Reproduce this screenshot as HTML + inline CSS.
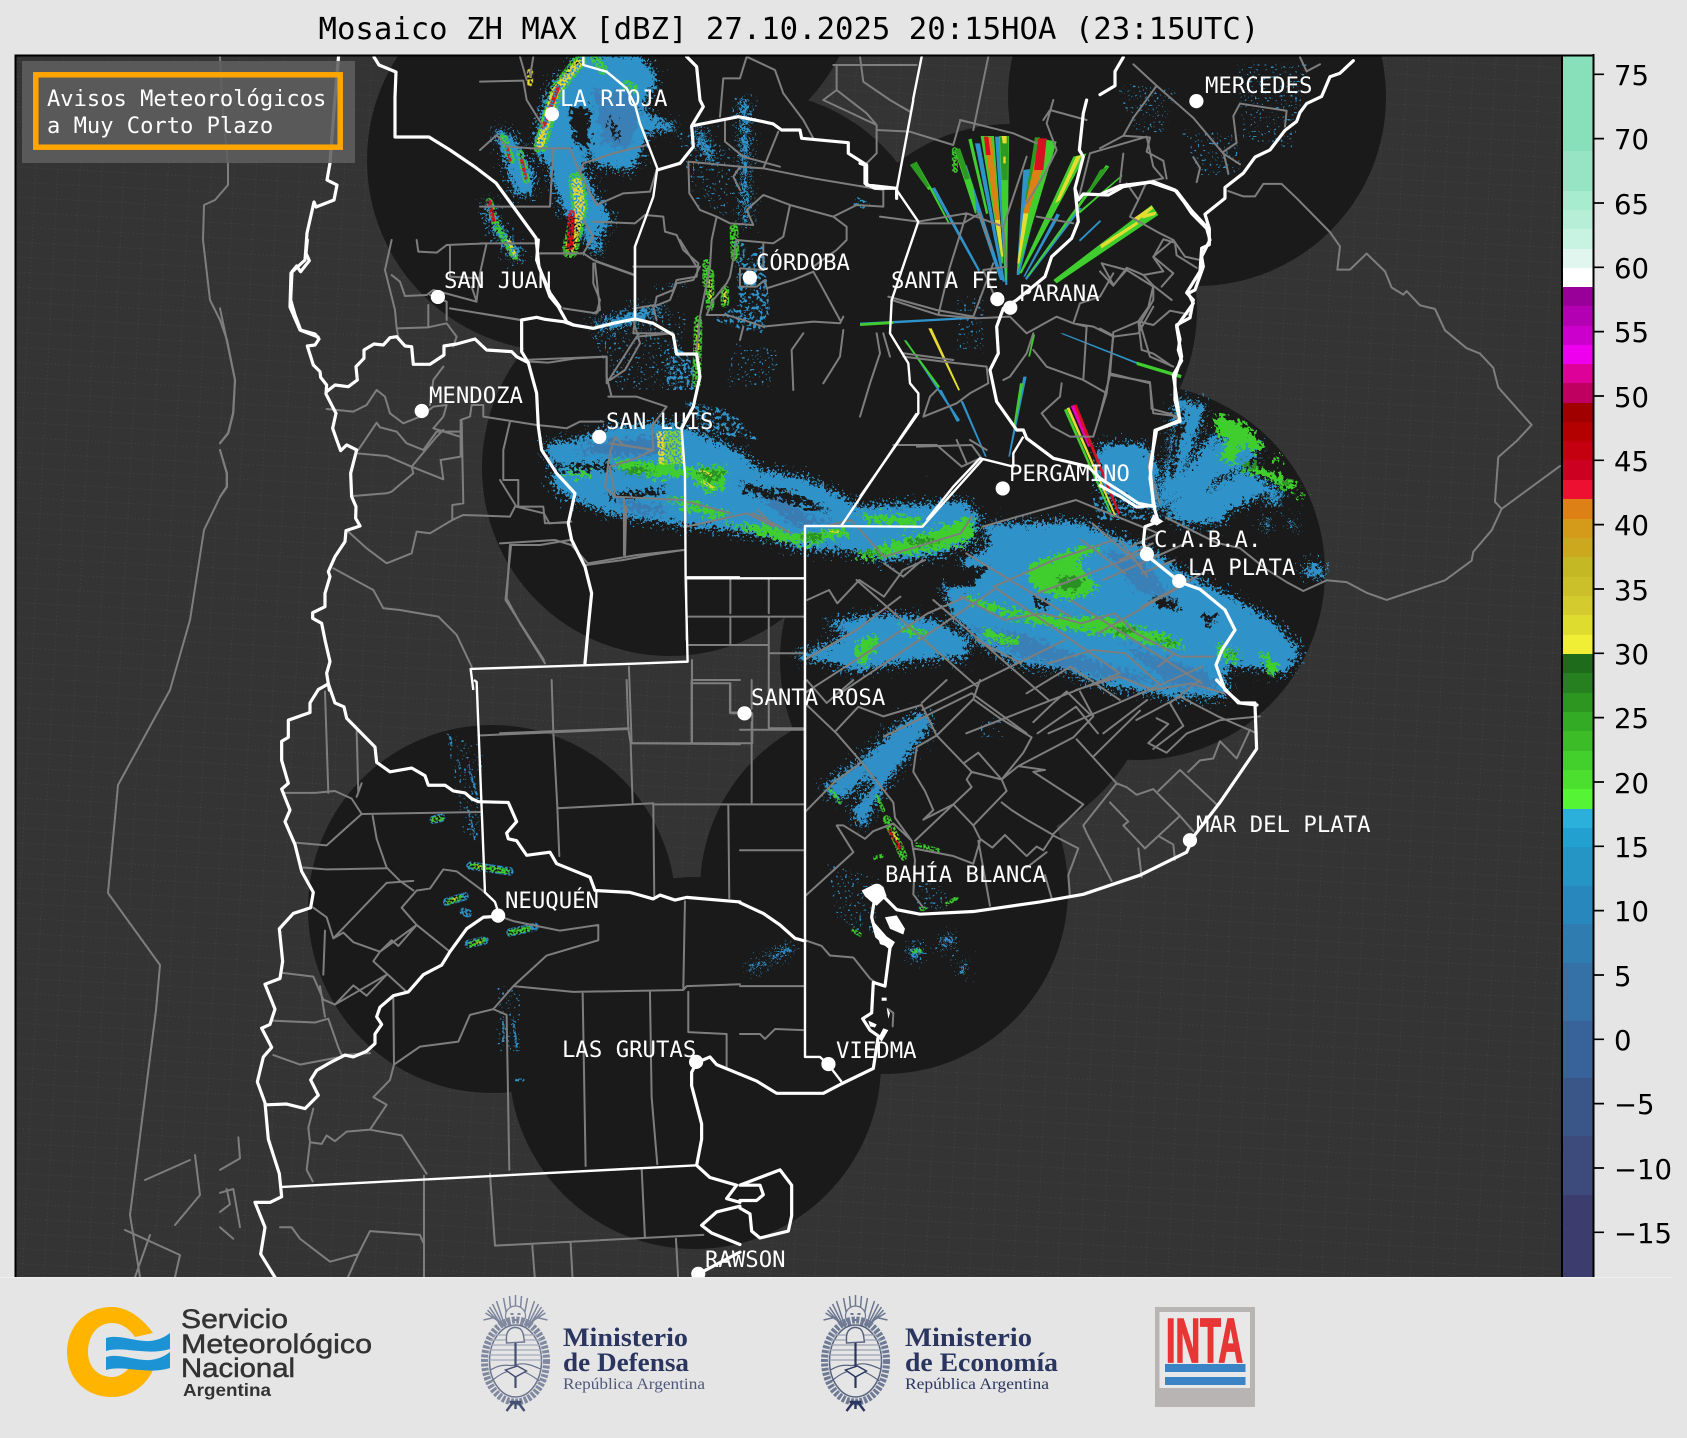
<!DOCTYPE html>
<html lang="es"><head><meta charset="utf-8"><title>Mosaico ZH MAX</title>
<style>
html,body{margin:0;padding:0;background:#e5e5e5;width:1687px;height:1438px;overflow:hidden}
svg{display:block}
.g{fill:none;stroke:#7e7e7e;stroke-width:2;vector-effect:non-scaling-stroke;stroke-linejoin:round;stroke-linecap:round}
.w{fill:none;stroke:#fff;stroke-width:3.2;vector-effect:non-scaling-stroke;stroke-linejoin:round;stroke-linecap:round}
.t{fill:none;stroke:#fff;stroke-width:2.4;vector-effect:non-scaling-stroke;stroke-linejoin:round}
.l{font-family:"DejaVu Sans Mono","Liberation Mono",monospace;font-size:22.3px;fill:#fff}
.k{font-family:"DejaVu Sans","Liberation Sans",sans-serif;font-size:27.5px;fill:#000}
.s{font-family:"Liberation Sans",sans-serif;fill:#333}
.m{font-family:"Liberation Serif",serif;fill:#2a3560}
</style></head><body>
<svg xmlns="http://www.w3.org/2000/svg" width="1687" height="1438" viewBox="0 0 1687 1438">
<defs>
<pattern id="dots" width="22" height="15" patternUnits="userSpaceOnUse" patternTransform="rotate(3)">
<rect width="22" height="15" fill="#343434"/>
<path d="M0 1h22M1 0v15" stroke="#424242" stroke-width="1" stroke-dasharray="1 3" fill="none"/>
</pattern>
<clipPath id="ax"><rect x="15" y="55" width="1547" height="1222"/></clipPath>
<filter id="r" filterUnits="userSpaceOnUse" x="0" y="0" width="1687" height="1438" color-interpolation-filters="sRGB">
<feTurbulence type="fractalNoise" baseFrequency=".24" numOctaves="3" seed="3"/>
<feDisplacementMap in="SourceGraphic" scale="20" xChannelSelector="R" yChannelSelector="G"/>
</filter>
<filter id="r2" filterUnits="userSpaceOnUse" x="0" y="0" width="1687" height="1438" color-interpolation-filters="sRGB">
<feTurbulence type="fractalNoise" baseFrequency=".4" numOctaves="2" seed="9"/>
<feDisplacementMap in="SourceGraphic" scale="46" xChannelSelector="G" yChannelSelector="R"/>
</filter>
<filter id="s" filterUnits="userSpaceOnUse" x="0" y="0" width="1687" height="1438" color-interpolation-filters="sRGB">
<feTurbulence type="fractalNoise" baseFrequency=".5" numOctaves="1" seed="7"/>
<feColorMatrix type="matrix" values="0 0 0 0 0 0 0 0 0 0 0 0 0 0 0 9 0 0 0 -3.7" result="m"/>
<feComposite in="SourceGraphic" in2="m" operator="in"/>
</filter>
<filter id="sm" filterUnits="userSpaceOnUse" x="0" y="0" width="1687" height="1438" color-interpolation-filters="sRGB">
<feTurbulence type="fractalNoise" baseFrequency=".3" numOctaves="2" seed="5"/>
<feColorMatrix type="matrix" values="0 0 0 0 0 0 0 0 0 0 0 0 0 0 0 12 0 0 0 -6.2" result="m"/>
<feComposite in="SourceGraphic" in2="m" operator="in"/>
</filter>
<filter id="sp" filterUnits="userSpaceOnUse" x="0" y="0" width="1687" height="1438" color-interpolation-filters="sRGB">
<feTurbulence type="fractalNoise" baseFrequency=".42" numOctaves="1" seed="11"/>
<feColorMatrix type="matrix" values="0 0 0 0 0 0 0 0 0 0 0 0 0 0 0 14 0 0 0 -8.9" result="m"/>
<feComposite in="SourceGraphic" in2="m" operator="in"/>
</filter>
<g id="emb">
<g stroke="#6b7690" stroke-width="1.5" fill="none">
<path d="M0-21V-58M3-21L6-57M-3-21L-6-57M6-23L12-55M-6-23L-12-55M10-25L19-52M-10-25L-19-52M12-27L23-49M-12-27L-23-49M14-28L26-46M-14-28L-26-46M16-30L28-43M-16-30L-28-43M17-32L30-40M-17-32L-30-40M19-36L32-33M-19-36L-32-33"/>
</g>
<circle cx="0" cy="-37" r="10" fill="#e5e5e5" stroke="#6b7690" stroke-width="1.2"/>
<path d="M-5-39h3M2-39h3M-3-33h6" stroke="#2a3560" stroke-width="1.3"/>
<ellipse cx="0" cy="8" rx="31" ry="41" fill="none" stroke="#6f7a94" stroke-width="7" stroke-dasharray="3 1.5"/>
<ellipse cx="0" cy="8" rx="26" ry="36" fill="#e5e5e5" stroke="#56627f" stroke-width="1.5"/>
<path d="M-25-8H25M-26-3H26M-26 2H26M-26 7H26M-25-13H25M-22-18H22" stroke="#9aa2b4" stroke-width="1.2"/>
<path d="M-25 17C-12 9-6 14 0 12C8 9 16 12 25 16M-24 28C-14 20-8 17 0 18C8 17 14 21 24 28" fill="none" stroke="#56627f" stroke-width="1.2"/>
<path d="M-9-13C-10-24-2-28 5-24C9-20 8-14 9-11L-9-10Z" fill="#e5e5e5" stroke="#56627f" stroke-width="1.4"/>
<path d="M0-10V35" stroke="#2a3560" stroke-width="2.2"/>
<path d="M-10 17L0 24L11 18L2 13Z" fill="#e5e5e5" stroke="#2a3560" stroke-width="1.4"/>
<path d="M-9 58L-3 50H3L9 58M0 50L0 56M-6 49H6" fill="none" stroke="#2a3560" stroke-width="2.4"/>
</g>
</defs>

<rect width="1687" height="1438" fill="#e5e5e5"/>
<text x="318.5" y="39" font-family="'DejaVu Sans Mono','Liberation Mono',monospace" font-size="30.65" fill="#000">Mosaico ZH MAX [dBZ] 27.10.2025 20:15HOA (23:15UTC)</text>

<g clip-path="url(#ax)">
<rect x="15" y="55" width="1547" height="1222" fill="url(#dots)"/>
<!-- radar coverage -->
<g fill="#1a1a1a">
<circle cx="558" cy="160" r="191"/><circle cx="670" cy="-30" r="190"/><circle cx="750" cy="278" r="187"/>
<circle cx="1011" cy="310" r="186"/><circle cx="1197" cy="97" r="189"/><circle cx="670" cy="468" r="188"/>
<circle cx="1137" cy="572" r="188"/><circle cx="968" cy="660" r="188"/><circle cx="884" cy="890" r="184"/>
<circle cx="695" cy="1063" r="186"/><circle cx="492" cy="909" r="184"/><circle cx="872" cy="445" r="62"/>
</g>

<!-- sparse speckle -->
<g filter="url(#sp)" fill="#2f8fc6">
<g transform="translate(1100,50) scale(.3333,.3571)">
<path d="M40,90L230,110L200,230H110ZM410,30L620,40L580,280L430,250ZM240,220L420,240V350H300Z"/>
</g>
<g transform="translate(860,100) scale(.3333)"><path d="M290,590L370,590V760L300,700Z"/></g>
<g transform="translate(480,50) scale(.3333)">
<path d="M590,240L760,300L740,500L650,470ZM760,880L900,900L880,1010H740ZM300,800L620,780L600,1020H420Z"/>
<path d="M1430,740L1510,760V900H1430ZM520,690H620V720H520Z"/>
</g>
<g transform="translate(740,680) scale(.3333,.3827)">
<path d="M260,480L420,520L400,680L290,620ZM530,520L620,540V600H530ZM720,100H790V150H720Z"/>
</g>
<g transform="translate(220,680) scale(.3333,.3827)">
<path d="M680,140L790,170L780,420L730,400ZM830,790L900,820V970H830Z"/>
</g>
</g>

<!-- medium speckle -->
<g filter="url(#sm)" fill="#2f93ca">
<g transform="translate(480,50) scale(.3333)">
<path d="M760,560L800,580L790,640L850,580L870,780L850,850L790,840L700,810L780,760L770,690Z"/>
<path d="M560,880L640,920L650,1020L560,1020ZM1130,440L1170,460L1160,480L1120,465ZM520,190L590,240L580,250L510,210Z"/>
</g>
<g transform="translate(500,400) scale(.5485,.3333)">
<path d="M330,0L420,30L470,120L380,100ZM1080,290L1120,290L1180,360L1090,360Z"/>
</g>
</g>

<!-- rough blue echoes fringe -->
<g filter="url(#r2)"><use href="#blue"/></g>
<!-- rough blue echoes -->
<g filter="url(#r)">
<g id="blue">
<g transform="translate(500,400) scale(.5485,.3333)">
<path fill="#2f93ca" d="M85,130L130,130L200,90L300,70L360,100L440,165L470,215L550,235L620,290L650,325L700,320L790,320L840,305L870,350L860,420L800,460L700,478L640,445L550,440L470,400L400,380L340,370L250,350L190,330L130,290L95,250L110,205L90,170Z"/>
<path fill="#3a7cb2" d="M130,150L200,120L290,110L330,130L290,165L200,165ZM470,290L520,300L560,350L620,370L540,380ZM210,300L300,320L300,345L230,330Z"/>
<path fill="#2f93ca" d="M810,560L850,480L900,440L880,380L1050,370L1180,450L1250,530L1360,620L1400,660L1455,750L1430,820L1390,800L1320,790L1320,885L1230,885L1100,850L1020,800L950,790L880,730L830,650Z"/>
<path fill="#2f93ca" d="M600,670L700,650L780,660L850,720L850,770L780,770L700,790L650,810L600,780L540,770L600,740L640,700Z"/>
<path fill="#3a7fb6" d="M850,680L950,700L1040,760L1120,800L1230,860L1100,830L950,770ZM1130,730L1290,820L1310,870L1230,860ZM1100,450L1170,480L1230,600L1160,570Z"/>
<path fill="#1a1a1a" d="M100,195L200,190L200,208L110,208ZM200,280L300,265L290,282L210,297ZM440,252L540,282L600,335L520,305L450,275ZM975,595L1000,595L1000,625L975,620ZM1190,590L1230,600L1240,630L1200,620ZM1280,640L1310,650L1290,680ZM820,500L890,500L860,560L810,560Z"/>
</g>
<g transform="translate(480,50) scale(.3333)" fill="#2f93ca">
<path d="M330,20L470,20L530,90L480,170L520,210L590,230L500,240L480,300L450,355L350,340L330,300L300,340L330,420L390,510L340,560L370,610L320,580L300,500L260,490L210,350L170,300L190,180L230,100L300,30Z"/>
<path fill="#3a7fb6" d="M340,120L460,130L480,200L440,300L370,280Z"/>
<path fill="#1a1a1a" d="M265,170L330,175L325,300L285,280ZM385,200L400,205L420,270L395,250Z"/>
<path d="M50,240L100,265L160,390L150,430L110,430L80,330ZM20,445L50,520L115,610L105,630L60,560L25,500Z"/>
<path d="M785,150L798,150L802,520L792,520ZM640,240L650,238L690,320L678,322ZM665,245L672,245L700,330L692,330Z"/>
<path d="M340,830L460,790L560,765L470,810L380,835Z"/>
</g>
<g transform="translate(1100,50) scale(.3333,.3571)" fill="#2f93ca">
<path d="M175,1290L235,985L310,995L290,1060L240,1200ZM175,1290L330,1090L360,1070L290,1200ZM200,1290L360,1090L480,1110L440,1160L340,1200L290,1270ZM200,1300L430,1180L560,1250L480,1240L380,1290L360,1320L250,1320Z"/>
<path d="M0,1110L130,1110L170,1170L170,1290L100,1270L0,1220Z"/>
<path d="M620,1445H665V1470H620ZM505,1250H530V1270H505ZM490,1320L510,1325L500,1340ZM570,1320L590,1325L580,1335Z"/>
<path fill="#1a1a1a" d="M225,1060L255,1000L250,1060L220,1190L205,1190Z"/>
</g>
<g transform="translate(740,680) scale(.3333,.3827)" fill="#2f8fc6">
<path d="M255,285L370,210L470,130L540,90L570,110L520,170L440,260L400,320L370,380L340,345L410,270L380,250L300,310Z"/>
<path d="M600,690L630,665L635,685L610,695ZM515,700L540,700L535,725L520,725ZM664,745H674V760H664Z"/>
<path d="M25,755L70,735L72,740L30,760ZM90,725L150,695L155,700L95,730Z"/>
</g>
</g>
</g>

<!-- green layers -->
<g filter="url(#r)">
<g transform="translate(500,400) scale(.5485,.3333)" fill="#3fce2e">
<path d="M205,180L300,190L345,205L410,200L415,260L380,275L340,225L280,235L220,205Z"/>
<path d="M300,295L360,310L420,345L400,355L340,330ZM120,215L170,215L160,235L120,228Z"/>
<path d="M410,370L480,375L540,405L620,385L640,400L560,435L510,420Z"/>
<path d="M655,340L770,355L760,378L670,365ZM650,460L730,420L800,385L865,350L860,420L800,450L700,470L660,475Z"/>
<path d="M850,585L930,625L1000,650L1100,650L1160,680L1230,715L1250,750L1180,730L1100,700L1000,680L930,650L860,610Z"/>
<path d="M970,490L1060,440L1100,440L1050,480L1080,540L1090,570L1040,600L990,580L960,530Z"/>
<path d="M720,670L770,690L780,710L740,700ZM650,720L690,710L670,790L650,790Z"/>
<path d="M1310,730L1350,760L1340,785L1310,770ZM1385,750L1420,800L1405,830L1395,800ZM880,690L950,720L930,735L880,710Z"/>
<g fill="#2c8f24">
<ellipse cx="1140" cy="690" rx="25" ry="9"/><ellipse cx="1040" cy="550" rx="25" ry="20"/><ellipse cx="770" cy="425" rx="30" ry="8"/><ellipse cx="570" cy="412" rx="20" ry="8"/><ellipse cx="250" cy="212" rx="30" ry="8"/><ellipse cx="385" cy="225" rx="22" ry="14"/><ellipse cx="680" cy="458" rx="25" ry="6"/><ellipse cx="1215" cy="725" rx="20" ry="7"/><ellipse cx="1335" cy="765" rx="12" ry="8"/>
</g>
</g>
<g transform="translate(1100,50) scale(.3333,.3571)" fill="#3fce2e">
<path d="M345,1020L430,1045L490,1105L470,1125L420,1110L400,1160L360,1140L380,1090L350,1070ZM430,1160L480,1170L560,1200L600,1225L560,1230L490,1195L430,1180ZM520,1130L545,1145L535,1160L520,1145ZM600,1245H615V1258H600Z"/>
<ellipse cx="450" cy="1165" rx="24" ry="9" fill="#2c8f24"/><ellipse cx="560" cy="1212" rx="16" ry="7" fill="#2c8f24"/>
</g>
</g>

<!-- speckled hot cores -->
<g filter="url(#s)" fill="none" stroke-linecap="round">
<g transform="translate(500,400) scale(.5485,.3333)">
<path d="M285,95L330,90L335,190L290,195Z" fill="#e6dc30"/>
<path d="M300,90L330,90L330,200L300,195Z" fill="#3fce2e" opacity=".6"/>
<path d="M370,245L390,265M365,212L385,225M600,392L615,395" stroke="#e6dc30" stroke-width="8"/>
</g>
<g transform="translate(480,50) scale(.3333)">
<path d="M300,30L230,120L180,290" stroke="#3fce2e" stroke-width="40"/>
<path d="M295,40L225,125L180,285" stroke="#e6dc30" stroke-width="24"/>
<path d="M235,110L190,230" stroke="#d81020" stroke-width="13"/>
<path d="M345,25L370,60M440,105L460,115" stroke="#3fce2e" stroke-width="30"/>
<path d="M290,390L300,470L270,600" stroke="#3fce2e" stroke-width="50"/>
<path d="M290,400L300,470L272,590" stroke="#e6dc30" stroke-width="32"/>
<path d="M275,490L270,590" stroke="#d81020" stroke-width="20"/>
<path d="M70,260L95,330M120,310L140,390" stroke="#3fce2e" stroke-width="22"/>
<path d="M80,290L90,330M125,330L138,385" stroke="#d81020" stroke-width="10"/>
<path d="M28,455L50,530L105,620" stroke="#3fce2e" stroke-width="22"/>
<path d="M28,455L40,510" stroke="#d81020" stroke-width="12"/>
<path d="M85,570L105,615" stroke="#e6dc30" stroke-width="10"/>
<path d="M150,65L150,100" stroke="#e6dc30" stroke-width="18"/>
<path d="M762,535L765,620M690,670L690,770M735,720L735,760M655,810L650,1000M680,640L680,700" stroke="#3fce2e" stroke-width="26"/>
<path d="M690,690L692,750M735,725L735,755M655,830L652,900" stroke="#e6dc30" stroke-width="9"/>
<path d="M1425,300L1425,360" stroke="#3fce2e" stroke-width="18"/>
</g>
<g transform="translate(740,680) scale(.3333,.3827)">
<path d="M440,365L465,410L490,460" stroke="#3fce2e" stroke-width="24"/>
<path d="M450,395L480,440" stroke="#d81020" stroke-width="10"/>
<path d="M460,400L470,415" stroke="#e6dc30" stroke-width="8"/>
<path d="M530,430L595,445M405,465L425,460M620,585L650,570M545,598L555,598M520,708H540M270,285L300,320M410,305L430,340M340,655L360,665" stroke="#3fce2e" stroke-width="11"/>
</g>
<g transform="translate(220,680) scale(.3333,.3827)">
<path d="M640,365L665,360M680,580L735,565M750,485L870,500M745,690L795,680M870,660L945,645M730,605L745,610" stroke="#2f93ca" stroke-width="22"/>
<path d="M640,365L665,360M685,580L720,568M755,485L860,500M750,692L790,680M870,660L925,650" stroke="#3fce2e" stroke-width="14"/>
<path d="M690,578L710,570M770,688L780,685M770,485L780,488" stroke="#e6dc30" stroke-width="6"/>
<path d="M690,150L695,170M715,215L720,230M745,225L770,300M880,890L890,960M850,890L850,940M745,340L765,415M885,1045H910" stroke="#2f93ca" stroke-width="7"/>
</g>
</g>

<!-- Santa Fe fan (spokes) -->
<g transform="translate(860,100) scale(.3333)">
<g fill="#2f93ca">
<path d="M215,265L225,262L360,510L355,515ZM305,200L320,195L430,540L420,540ZM345,130L360,130L435,545L428,545ZM405,110L445,110L442,555L436,555ZM490,210L560,200L478,525L470,525ZM590,340L600,345L495,530L490,530ZM650,320L665,325L500,540L495,535ZM720,360L723,365L660,425L657,420ZM600,700L610,700L840,790L838,795ZM0,668L350,650L350,656L0,676ZM240,870L245,870L295,965L290,965ZM300,900L310,905L380,1070L375,1070ZM490,830L500,830L450,1070L445,1070ZM135,722L140,722L300,960L295,965Z"/>
</g>
<g fill="#3fce2e">
<path d="M150,195L170,185L215,265L205,270ZM205,260L212,258L270,370L265,372ZM283,150L300,145L340,260L350,340L345,340ZM325,118L335,116L385,340L378,342ZM362,108L402,108L430,490L425,490ZM418,108L447,108L445,300L440,540L435,540ZM525,112L590,125L485,480L470,520ZM640,170L680,160L485,520L478,520ZM738,195L748,200L505,530L500,530ZM785,225L788,228L660,340L655,336ZM875,315L895,345L590,550L580,540ZM0,670L100,663L100,672L0,678ZM830,785L965,825L962,835L830,795ZM520,700L525,705L510,770L505,770ZM480,850L490,850L465,980L460,980ZM132,722L137,720L240,860L235,865Z"/>
</g>
<g fill="#2c9a20"><path d="M285,150L300,145L330,235L315,240ZM150,195L170,185L208,260L200,262ZM420,110L445,108L443,240L425,240ZM525,112L540,112L510,300L495,300ZM720,210L745,200L700,265L680,280Z"/></g>
<g fill="#dd8015"><path d="M372,112L395,112L420,370L408,370ZM530,160L555,180L505,340L490,340Z"/></g>
<g fill="#e6dc30"><path d="M405,360L420,360L430,470L424,470ZM648,170L665,165L600,300L585,310ZM425,108H440V130H428ZM430,170H437V190H430ZM490,340L505,340L478,490L472,490ZM820,355L875,318L880,325L830,365ZM720,435L830,365L835,372L725,445ZM840,345L890,335L885,345L850,355ZM205,685L215,685L300,870L295,872Z"/></g>
<g fill="#d81020"><path d="M372,110H385L392,165L378,165ZM535,115H560L550,210L522,210ZM640,915L650,913L780,1240L775,1245Z"/></g>
<g fill="#ee00bb"><path d="M632,918L642,915L690,1040L684,1040Z"/></g>
<g fill="#e6dc30"><path d="M620,925L628,922L770,1250L765,1252Z"/></g>
<g fill="#3fce2e"><path d="M612,930L620,926L760,1250L755,1252Z"/></g>
</g>

<!-- grey borders -->
<path class="g" d="M220,57L222,100L228,165L228,185L215,200L204,205L203,240L210,300L220,320L227,340L235,380L233,413L228,433L220,443M220,450L227,473L227,487L220,497L204,530L190,620L170,690L118,785L108,893L160,965L156,1010L130,1215L140,1277"/>
<path class="g" d="M195,1155L200,1195L175,1225M125,1230L180,1255L175,1277M145,1180L190,1160M135,1277L150,1235"/>
<g transform="translate(220,240) scale(.3333)">
<path class="g" d="M320,507L400,515L440,495L470,450L495,470L510,520L550,550L600,530L640,500L680,495L670,530L640,565L720,590M415,630L470,548L480,562L530,575L560,610L610,630L650,575L720,575M410,640L500,648L575,680L670,718L662,660L722,650M575,680L580,700L515,755L500,760L400,768M575,680L650,590L670,570M670,380L640,420L630,495M722,650L722,540L750,530L755,495L790,495L790,530L950,555L1000,560L1040,565L1080,545L1150,545M725,540L730,790L697,795L697,840L730,825L870,830L885,800L970,800L975,850L1040,848M697,840L630,880L590,875L575,940L500,970L440,925L385,875M340,985L460,1050L490,1105L540,1110L655,1130L710,1185L755,1280M870,915L860,1075L900,1150L975,1270M870,915L960,915L1050,900M1100,975L1210,960L1290,945L1390,930M1212,775L1212,945M1185,770L1155,740L1170,640L1185,590L1210,615L1300,630L1295,560L1340,500L1250,470L1165,470M870,545L850,630L850,720L895,720L895,800M930,365L985,368L1070,355L1160,350L1160,410L1175,470M530,265L625,262L680,250L710,290L700,320M515,105L540,125L555,168L620,165L640,150L770,185L755,140M525,210L530,265L535,290M625,195L625,262M690,205L900,240M630,165L680,185L680,240M515,0L495,90L510,150L525,210M590,0L595,35L650,38L680,15L800,10L780,100L770,180M690,15L690,110L780,115M1090,40L960,40M1130,65L1240,105M1120,70L1120,130L1140,180L1130,220L1030,205M1240,80H1430L1380,0M1440,80L1420,120L1370,130L1350,180L1300,200L1310,240M1240,240L1260,310L1215,390L1170,420"/>
<path class="g" d="M0,205L20,300L45,420L40,520L25,580L0,610M0,630L20,700L20,740L0,770"/>
</g>
<g transform="translate(220,680) scale(.3333,.3827)">
<path class="g" d="M315,30L325,295M410,135L415,295M195,295L285,295L345,290L395,310L425,350M425,350L780,345M425,350L320,432L225,425M425,270L410,305M458,355L470,415L500,490L540,525L580,550M250,490L320,495L500,492M280,595L320,620L340,675L425,598L500,530L580,525M340,675L370,660L400,685L480,710L590,640L545,595L590,550L630,545L670,495L710,500L795,555M590,640L690,710M480,710L515,680L535,695L590,640M460,735L480,710M460,735L560,815M500,770L440,825L400,798L345,848L310,835L280,775L185,765M345,848L500,770M315,655L310,770M838,617L880,630L1020,655L1135,640L1135,680L980,720L880,800L820,860L750,875L715,945L600,958L522,1005L520,830M522,1005L510,1045L460,1090L500,1110L450,1175L545,1190L620,1290M450,1175L380,1180L345,1205L320,1190L305,1212L270,1208L265,1170L280,1120M270,1208L260,1280L278,1310M880,800L1060,815L1390,810L1400,800L1560,795M1390,810L1395,578M1088,815L1097,1270M1290,815L1295,1090L1312,1265M820,860L860,875L868,1280M1405,815L1405,920L1520,925L1520,1010M775,145L1225,128L1232,165L1238,320M995,0L1000,135L1012,330L1018,460M1220,0L1225,128M1012,335L1300,322L1303,570M1303,325L1560,325M1232,165L1560,168M1415,0L1415,165M1525,325L1528,570M155,890L285,895L325,885L355,960L365,980L450,975M160,980L240,1005L360,985M300,800L315,880M180,1430L215,1430L240,1460L330,1520L415,1500L380,1568M415,1500L450,1440L600,1450L610,1470M612,1295L612,1568M810,1290L825,1478L1450,1450M1265,1275L1275,1458M937,1478L945,1568M1052,1472L1058,1568M1368,1460L1375,1568M1415,0H1560M1530,10L1530,85H1560"/>
<path class="g" d="M55,1195L60,1250L0,1280M0,1340L40,1330L50,1380L60,1430M0,1430L40,1460M20,1330L30,1370L0,1390"/>
</g>
<g transform="translate(740,680) scale(.3333,.3827)">
<path class="g" d="M200,65L290,140L365,215L460,320L465,360L515,420L525,470L520,560L550,595M195,345L285,265L365,215M285,135L355,70L430,95L545,65L590,145M590,145L695,240L680,260L695,280L640,325L550,365L580,340L555,290L520,240L530,175L590,145M590,145L700,50L780,100L875,150L850,190L785,260L695,240M675,215L715,190L785,260L800,290L700,380L640,325M700,380L720,415L757,438L795,405L860,460L890,435L910,445L940,405L860,365L815,340L785,320M525,420L640,325M195,565L340,450L290,380L310,380L375,415L400,395L460,375L515,420M937,405L1030,325L880,240L915,235L835,225L785,260M835,225L1000,150L1060,95L1020,30M1010,155L1130,270L1030,380L1040,400L1115,525M1130,270L1160,280L1190,300L1240,285L1320,355L1215,440L1150,380L1165,370L1110,320M1320,355L1360,395M1255,290L1320,235L1430,325M1280,190L1340,140L1440,105L1560,95M1280,190L1225,165L1285,115L1250,100M1345,240L1380,210L1420,205L1440,160L1490,205L1530,130M937,405L1015,440L985,510L990,565M715,420L750,590M860,490L920,450M915,510L935,570M1195,440L1205,515M1260,410L1300,430L1305,470M520,440L640,460L700,480L720,420M0,130H190M0,325H190M0,445H190M0,800H190M0,925H60L75,938L105,912L190,915M35,110V320M35,0V75M195,680L245,695L270,720L340,725L390,780L405,790M620,0L545,60M720,0L700,50M880,110L940,60L980,30L1050,90M1200,80L1130,140L1060,200M200,0L260,60L340,0M1380,0L1290,60L1330,120L1240,180"/>
<path class="g" d="M445,860L460,870L458,905"/>
</g>
<g transform="translate(500,400) scale(.5485,.3333)">
<path class="g" d="M560,600L600,570L615,610L655,540L700,590L735,510L775,480M700,490L735,530L770,480M555,780L650,690L730,590M650,540L870,860M790,600L1000,900M900,560L1130,820M1040,600L1280,850M850,460L1040,650M555,880L780,640L850,590M620,880L900,570M770,930L1030,720M850,1000L1130,820M1000,1000L1280,800M880,380L1050,300L1200,400M760,140L860,135L880,180M900,560L1010,480L1120,420M1100,540L1250,430M980,580L1170,460M1170,620L1280,520M1090,700L1240,560M1130,420L1180,530M1080,370L1170,500M1060,420L1140,520M1150,440L1200,400M1170,520L1230,480M1130,480L1190,430M840,590L920,660L990,640L1060,670L1120,640L1160,700L1240,770L1300,770M1200,800L1230,760M1000,790L1080,750L1140,760L1200,850M870,720L950,790M1050,870L1130,830L1190,870L1260,850L1320,880M980,1000L1050,920L1090,1000M1160,960L1240,890L1310,950L1380,1000M460,340L510,380L530,400M590,380L640,360L700,470L760,440L840,400L860,350M340,540V720M0,430L100,420L130,435L160,490L250,465L335,450M20,440L10,600L80,780M0,240L30,320L80,340L90,370L130,365M230,320L228,465M340,380L450,340L500,380L470,330M200,130L280,150L240,180L200,200L210,290L330,300L420,340M420,535V640M490,535V640M340,650H555M420,650V730M490,650V760H555M345,735L490,735L490,985H555M350,780V850H420L420,940L460,940L460,1030H240L235,800M350,850V1030M0,1000L235,985M960,880L1040,800L1130,900M1100,1000L1180,900M700,1010L860,880L960,1000"/>
</g>
<g transform="translate(480,50) scale(.3333)">
<path class="g" d="M0,95L130,92L140,150L190,230M50,255L0,300M50,255L80,290L160,295L270,295L300,370L350,465L430,430L510,425L530,360M300,370L310,340L400,310L500,285M0,470L210,470L220,295M0,580L175,580M175,610L310,610L340,630L465,675M340,515L465,520L495,495L550,500L555,545L590,555L610,600L655,640L650,680L590,690L580,720L530,740L525,765L465,775M310,510L340,560L310,610M345,640L360,780L340,790M465,650H650M625,335L780,350L760,380L780,420M625,335L628,430L660,480L710,500L695,570L690,650L660,800M710,500L750,520L820,525L800,480L850,435L930,465L910,560L880,580L770,570L750,680L740,700L700,750L680,795L740,795L790,810L850,830L1000,815L1080,820L1090,800M850,580V660L780,655V710H830L855,690L860,715L940,690L1000,665L1020,700L1080,810M930,465L1060,500L1100,530L1100,570L1070,600L1000,650M1060,500L1130,465L1210,470V420L1000,385L850,355L780,350M850,355L895,245M735,210V275L790,320L900,350M730,85L720,200M730,85H780L800,20M800,20L885,60L910,130L970,210L1000,265M1070,45V120L1030,150L1190,225V310L1160,340M1070,120L1160,190L1190,225M1190,240L1290,245L1420,285M1060,45H1310M1140,20L1150,95L1230,150L1290,185M1440,215L1420,285M1525,20L1480,240M1315,520L1450,520L1500,490L1535,600M1225,740L1370,780L1480,800L1540,640M660,800L650,900M790,830L780,870M125,810L0,790M125,930L380,920V1000L470,860L580,850M465,810L460,850L580,850M1090,840L1080,920L1030,1000M1210,850L1230,920M970,850L935,900L940,1020M1270,910L1420,930M120,20L140,90M160,20L150,80"/>
</g>
<g transform="translate(860,100) scale(.3333)">
<path class="g" d="M320,340L175,365L60,350M320,340L270,500L235,645L95,600M320,340L430,380L440,500L370,510L400,580M235,645L350,655L450,650L500,700L590,650L640,670L700,680L760,710L745,840L740,880L700,1010M530,350L640,370M550,60L570,30L680,60M580,0L560,70L590,150L555,220L500,310M430,380L500,170M655,300L690,160L860,110L880,200L910,235L860,245L835,300M800,250L835,300L810,350L900,400L940,420L975,470L1020,480M940,420L880,470L940,520L905,560M725,490L800,510L880,560V600L840,670L870,770L940,800M725,490L760,555L800,510M760,710L835,700L880,620M640,670L680,680L670,840L740,880M640,670L660,610L720,590L760,520M520,750L560,800L670,840M605,850L600,890L545,940L575,980L630,1010H700M750,820L870,850L880,940L960,950M130,770L250,785L380,800L385,850L330,880L290,910L190,950L210,890L230,870M520,700L500,760L450,830L430,840M50,700L60,760L30,850L0,950M100,1035H230L305,1100L360,1075M380,1050L330,1020M290,1020L320,1090M300,60L460,100L530,130"/>
</g>
<g transform="translate(1100,50) scale(.3333,.3571)">
<path class="g" d="M100,40L170,100L280,190L370,290L420,320M170,100L100,190L70,240L0,275M70,240L150,245L140,285L190,310L200,360M70,290L60,370M420,150L400,185L410,260L370,285L385,345M420,150L560,170L555,215M600,20L620,60L660,40M280,300L300,330L290,370M385,395L430,410H465L490,375H545L590,415L690,510L720,550L712,615H750L800,570L855,620L875,665L910,685L920,675L960,715L1005,725L1035,785L1100,835L1140,850L1180,890L1195,945L1295,1050L1250,1095L1195,1140L1185,1265L1205,1285L1175,1345L1120,1405L1115,1430L1035,1485L860,1540L800,1520L740,1490L680,1485L610,1515L560,1490L500,1455L420,1395L350,1380L200,1310M1380,1165L1205,1285M0,620L40,660L80,610L130,630L160,660L145,720L115,760L125,840L160,850L215,885M190,530L225,540L230,575L290,610M190,530L160,580L190,620L130,630M115,760L160,770L210,730L265,740M40,790L115,760M40,790L30,910L0,1020M30,910L150,930L155,1005L215,1020L235,1035M160,660L215,700M0,780L40,800M150,1130L145,1170L180,1270"/>
</g>

<!-- white borders -->
<path class="w" d="M338.500,57L334,110L330,163L327,180L337,185L334,200L316,207L314,202L307,233L305,260L291,273L290,307L300,330L318,337"/>
<path class="w" d="M374,57L379,65L396,72L395,97L395,137L429,137L450,150L475,167L496,183L536,238L539,267L550,293L560,307"/>
<path class="w" d="M1225,610L1235,630L1222,650L1216,665L1225,690L1240,703L1257,705"/>
<path class="t" d="M922,55L913,100"/>
<g transform="translate(220,240) scale(.3333)">
<path class="w" d="M262,0L258,40L268,62L242,95L230,78L216,95L212,180L225,225L242,270L285,282L297,297L285,315L262,318L280,375L300,395L302,412L320,435L318,462L348,520L338,565L352,605L362,632L380,615L410,630L392,700L395,770L408,800L407,835L420,858L378,872L375,905L345,950L325,995L330,1010L315,1060L315,1100L278,1118L278,1135L305,1150L315,1200L330,1265L320,1300L328,1350"/>
<path class="w" d="M320,455L345,435L385,440L412,420L408,380L432,355L432,330L462,312L490,315L510,293L530,290L555,318L575,320L580,373H630L672,345V318L710,312L765,297L800,330L875,335L890,350L925,368L950,460L955,560L965,630L1010,700L1065,760L1045,850L1055,900L1095,980L1115,1060L1105,1160L1095,1270"/>
<path class="w" d="M925,368L905,335V240L950,232L975,238L1030,245L1060,255L1120,265L1180,250L1245,237L1300,250L1360,285L1370,342H1430L1440,410L1420,500L1385,565"/>
<path class="t" d="M1385,565L1395,700L1397,1012H1560M1397,1012L1403,1265L1220,1272L752,1287L760,1350M1245,237V20L1252,0"/>
<path class="w" d="M955,0L950,60L990,170L1015,200L1040,245L1060,255"/>
</g>
<g transform="translate(220,680) scale(.3333,.3827)">
<path class="w" d="M325,10L295,25L270,60V85L205,105V150L185,160V210L205,270L185,285L210,340L195,370L225,430L245,500L280,555L272,595L220,610L178,650L188,735L180,780L135,795L165,860L150,900L125,910L155,960L130,985L112,1050L135,1105L145,1200L178,1290L185,1350L150,1365H105L135,1430L122,1500L170,1568"/>
<path class="w" d="M325,10L345,60L372,70L380,100L465,175L470,215L510,240L575,230L615,250L625,275H675L700,290L735,295L755,310L775,318L865,320L890,370L860,400L865,415L890,420L920,458L990,450L1010,480L1110,515L1125,550L1230,555L1300,572L1320,562L1365,575L1400,568L1560,580"/>
<path class="t" d="M762,0L770,5L795,555L825,580L838,615"/>
<path class="w" d="M838,617L790,620L740,650L690,710L665,745L610,770L565,815L520,825L480,855L470,880L485,900L465,925V950L440,970L400,985L375,980L330,1000L290,1020L272,1045L295,1085L255,1120L200,1108L140,1110"/>
<path class="t" d="M180,1325L1430,1268"/>
<path class="w" d="M1430,1268L1445,1200L1445,1160L1415,1060V1025L1430,1000L1470,985L1490,1005L1560,1030M1430,1268L1470,1300L1550,1320L1520,1355L1560,1365M1560,1375L1490,1390L1445,1425L1475,1445L1560,1475M1450,1545L1560,1495"/>
</g>
<g transform="translate(740,680) scale(.3333,.3827)">
<path class="t" d="M195,0V985H240L265,1005L305,1050"/>
<path class="w" d="M0,1030L50,1048L110,1080H250L305,1055L400,1015L415,930L390,915L368,885L395,870L400,790L435,800L450,700L410,670L395,620L405,565M0,582L70,610L120,640L165,675L195,682M430,565L470,600L540,612L700,605L900,580L1030,560L1200,510L1340,450L1360,410L1440,320L1550,180L1545,60H1495L1430,0"/>
<path class="w" d="M0,1320H60L70,1345L50,1360H0M0,1380L30,1395L35,1440L60,1458L145,1440L155,1400V1320L120,1280L60,1300L0,1320"/>
<path fill="#fff" d="M365,550L400,535L430,540L440,565L410,590L395,580L375,565ZM400,630L440,670L465,685L455,700L420,690ZM435,620L470,615L495,650L490,665L450,650ZM425,830H440V838H425ZM385,890L410,900L405,908L390,905ZM430,910L445,915L425,945L415,935Z"/>
<path fill="#fff" d="M440,855L450,870L445,885Z"/>
</g>
<g transform="translate(1100,50) scale(.3333,.3571)">
<path class="w" d="M70,20L45,60V100L0,125M760,30L720,65L690,75L665,130L620,150L600,175L590,200L555,225L510,280L465,300L430,345L375,385V415L315,460L328,500V545L305,555L300,620L260,680L280,700L270,750L230,770L240,810L235,840L245,870L220,910L240,1040L165,1065L150,1200L165,1290L175,1320L135,1335L130,1380L140,1415L240,1490L300,1510L375,1568M0,405L60,380L150,370L230,395L275,450L325,500M0,1220L60,1250L110,1280L160,1275"/>
<path fill="#fff" d="M160,1300L190,1320L170,1332L150,1320Z"/>
</g>
<g transform="translate(860,100) scale(.3333)">
<path class="w" d="M680,0L670,40L658,150L670,170L645,265L655,300L670,282L745,285L790,260L880,245L945,270L975,310L995,340L1040,385L1050,420L1025,470L1030,500L1005,570L985,580L1000,610L950,680L965,770L945,830V900L960,960L890,990L870,1100L880,1215M645,265L655,365L635,415L575,470L555,530L470,600L430,625L410,680L415,760L390,810L410,905L470,990H490L500,1015L580,1075L685,1100L720,1135L790,1180L835,1210L885,1220"/>
<path class="t" d="M490,1010L460,1060V1100L360,1075L280,1160L200,1260M160,0L110,270L175,365L95,600L90,700L145,790L150,850L175,880V940L0,1190"/>
<path class="w" d="M0,190L15,195V250L45,265H105"/>
</g>
<g transform="translate(500,400) scale(.5485,.3333)">
<path class="t" d="M556,1080V378L770,380L880,178M622,378L760,40M340,535H556"/>
</g>
<g transform="translate(480,50) scale(.3333)">
<path class="t" d="M310,20V45L380,65L440,115L465,165L480,220L532,355L520,440L465,590V800"/>
<path class="w" d="M620,20L650,50L660,150L670,170L635,228L640,290L600,340L532,360M635,228L775,200L850,215L880,222L905,240H960L965,265L1105,278V310L1160,345V405L1250,415L1250,445"/>
</g>

<!-- city dots -->
<g fill="#fff" transform="scale(1.0759)">
<circle cx="1112" cy="94" r="6.600"/><circle cx="513" cy="106" r="6.600"/><circle cx="697" cy="258" r="6.600"/><circle cx="407" cy="276" r="6.600"/><circle cx="927" cy="278" r="6.600"/><circle cx="939" cy="286" r="6.600"/><circle cx="392" cy="382" r="6.600"/><circle cx="557" cy="406" r="6.600"/><circle cx="932" cy="454" r="6.600"/><circle cx="1066" cy="515" r="6.600"/><circle cx="1096" cy="540" r="6.600"/><circle cx="692" cy="663" r="6.600"/><circle cx="1106" cy="781" r="6.600"/><circle cx="463" cy="851" r="6.600"/><circle cx="815" cy="828" r="6.600"/><circle cx="647" cy="987" r="6.600"/><circle cx="770" cy="989" r="6.600"/><circle cx="649" cy="1184" r="6.600"/>
</g>
</g>

<!-- city labels -->
<g class="l">
<text x="1205" y="93">MERCEDES</text>
<text x="560" y="106">LA RIOJA</text>
<text x="756" y="270">CÓRDOBA</text>
<text x="444" y="288">SAN JUAN</text>
<text x="891" y="288">SANTA FE</text>
<text x="1019" y="301">PARANA</text>
<text x="429" y="403">MENDOZA</text>
<text x="606" y="429">SAN LUIS</text>
<text x="1009" y="481">PERGAMINO</text>
<text x="1154" y="547">C.A.B.A.</text>
<text x="1188" y="575">LA PLATA</text>
<text x="751" y="705">SANTA ROSA</text>
<text x="1196" y="832">MAR DEL PLATA</text>
<text x="505" y="908">NEUQUÉN</text>
<text x="885" y="882">BAHÍA BLANCA</text>
<text x="562" y="1057">LAS GRUTAS</text>
<text x="836" y="1058">VIEDMA</text>
<text x="705" y="1267">RAWSON</text>
</g>

<!-- notice box -->
<rect x="22" y="61" width="333" height="102" fill="#5e5e5e" opacity=".88"/>
<rect x="35.800" y="74.800" width="304.400" height="72.400" fill="none" stroke="#ffa500" stroke-width="5.500"/>
<text x="47" y="106" font-family="'DejaVu Sans Mono','Liberation Mono',monospace" font-size="22.1" fill="#fff">Avisos Meteorológicos</text>
<text x="47" y="133" font-family="'DejaVu Sans Mono','Liberation Mono',monospace" font-size="22.1" fill="#fff">a Muy Corto Plazo</text>

<!-- axes frame -->
<path d="M15.500,55V1277M14.500,55.500H1563M1562,55V1277" stroke="#000" stroke-width="2" fill="none"/>

<!-- colourbar -->
<g>
<rect x="1563" y="55" width="30" height="96" fill="#88e0ba"/>
<rect x="1563" y="151" width="30" height="40" fill="#96e4c3"/>
<rect x="1563" y="191" width="30" height="19" fill="#a8ecd0"/>
<rect x="1563" y="210" width="30" height="19" fill="#b6eed8"/>
<rect x="1563" y="229" width="30" height="20" fill="#c8f2e2"/>
<rect x="1563" y="249" width="30" height="19" fill="#e0f6ee"/>
<rect x="1563" y="268" width="30" height="19" fill="#fff"/>
<rect x="1563" y="287" width="30" height="19" fill="#990099"/>
<rect x="1563" y="306" width="30" height="20" fill="#b300b3"/>
<rect x="1563" y="326" width="30" height="19" fill="#cc00cc"/>
<rect x="1563" y="345" width="30" height="19" fill="#ee00ee"/>
<rect x="1563" y="364" width="30" height="19" fill="#dd0099"/>
<rect x="1563" y="383" width="30" height="20" fill="#c00060"/>
<rect x="1563" y="403" width="30" height="19" fill="#a00000"/>
<rect x="1563" y="422" width="30" height="19" fill="#b30000"/>
<rect x="1563" y="441" width="30" height="19" fill="#c40010"/>
<rect x="1563" y="460" width="30" height="20" fill="#cc0020"/>
<rect x="1563" y="480" width="30" height="19" fill="#ee1030"/>
<rect x="1563" y="499" width="30" height="20" fill="#dd8015"/>
<rect x="1563" y="519" width="30" height="19" fill="#d49a1a"/>
<rect x="1563" y="538" width="30" height="19" fill="#cca81f"/>
<rect x="1563" y="557" width="30" height="20" fill="#c4b825"/>
<rect x="1563" y="577" width="30" height="19" fill="#ccc02a"/>
<rect x="1563" y="596" width="30" height="19" fill="#d4cc2e"/>
<rect x="1563" y="615" width="30" height="20" fill="#dfdc30"/>
<rect x="1563" y="635" width="30" height="19" fill="#f0ee35"/>
<rect x="1563" y="654" width="30" height="19" fill="#1f6b1c"/>
<rect x="1563" y="673" width="30" height="20" fill="#26801f"/>
<rect x="1563" y="693" width="30" height="19" fill="#2c9620"/>
<rect x="1563" y="712" width="30" height="19" fill="#33ab25"/>
<rect x="1563" y="731" width="30" height="20" fill="#3cbd28"/>
<rect x="1563" y="751" width="30" height="19" fill="#43cf2c"/>
<rect x="1563" y="770" width="30" height="19" fill="#4cdf30"/>
<rect x="1563" y="789" width="30" height="20" fill="#55f535"/>
<rect x="1563" y="809" width="30" height="19" fill="#2bb0dc"/>
<rect x="1563" y="828" width="30" height="19" fill="#22a0d0"/>
<rect x="1563" y="847" width="30" height="39" fill="#2495c5"/>
<rect x="1563" y="886" width="30" height="38" fill="#2888bd"/>
<rect x="1563" y="924" width="30" height="39" fill="#2e7cb0"/>
<rect x="1563" y="963" width="30" height="58" fill="#3570a6"/>
<rect x="1563" y="1021" width="30" height="57" fill="#38629a"/>
<rect x="1563" y="1078" width="30" height="58" fill="#3a5689"/>
<rect x="1563" y="1136" width="30" height="59" fill="#3c4a7c"/>
<rect x="1563" y="1195" width="30" height="82" fill="#3c3d6e"/>
<path d="M1593.500,54V1277M1562,55.500H1594" stroke="#000" stroke-width="2" fill="none"/>
<path d="M1594,74.300h10M1594,138.600h10M1594,203h10M1594,267.300h10M1594,331.600h10M1594,396h10M1594,460.300h10M1594,524.600h10M1594,589h10M1594,653.300h10M1594,717.600h10M1594,782h10M1594,846.300h10M1594,910.600h10M1594,975h10M1594,1039.300h10M1594,1103.600h10M1594,1168h10M1594,1232.300h10" stroke="#000" stroke-width="1.700"/>
<g class="k">
<text x="1614" y="85">75</text><text x="1614" y="149">70</text><text x="1614" y="214">65</text><text x="1614" y="278">60</text><text x="1614" y="342">55</text><text x="1614" y="407">50</text><text x="1614" y="471">45</text><text x="1614" y="535">40</text><text x="1614" y="600">35</text><text x="1614" y="664">30</text><text x="1614" y="728">25</text><text x="1614" y="793">20</text><text x="1614" y="857">15</text><text x="1614" y="921">10</text><text x="1614" y="986">5</text><text x="1614" y="1050">0</text><text x="1614" y="1114">−5</text><text x="1614" y="1179">−10</text><text x="1614" y="1243">−15</text>
</g>
</g>

<!-- footer logos -->
<rect x="0" y="1277" width="1672" height="1" fill="#efefef"/>
<path fill="#ffb400" d="M153,1333C140,1315 125,1307 112,1307C85,1307 67,1327 67,1352C67,1378 85,1397 112,1397C130,1397 145,1387 153,1370L132,1364C125,1374 118,1377 112,1377C98,1377 88,1367 88,1352C88,1335 98,1323 112,1323C120,1323 128,1327 135,1337Z"/>
<path fill="#1b93d5" d="M106,1338C120,1334 135,1342 150,1341C160,1340 166,1336 170,1333V1349C160,1352 150,1352 140,1351C128,1350 115,1348 106,1351Z"/>
<path fill="#1b93d5" d="M106,1357C120,1353 135,1361 150,1360C160,1359 166,1355 170,1352V1368C160,1371 150,1371 140,1370C128,1369 115,1367 106,1370Z"/>
<g stroke="#333" stroke-width=".5">
<text class="s" x="181" y="1328" font-size="27" textLength="107" lengthAdjust="spacingAndGlyphs">Servicio</text>
<text class="s" x="181" y="1353" font-size="27" textLength="191" lengthAdjust="spacingAndGlyphs">Meteorológico</text>
<text class="s" x="181" y="1377" font-size="27" textLength="114" lengthAdjust="spacingAndGlyphs">Nacional</text>
</g>
<text class="s" x="183" y="1396" font-size="17.500" font-weight="bold" textLength="88" lengthAdjust="spacingAndGlyphs">Argentina</text>

<use href="#emb" x="515.500" y="1353" opacity=".85"/>
<text class="m" x="563" y="1346" font-size="26" font-weight="bold" textLength="125" lengthAdjust="spacingAndGlyphs">Ministerio</text>
<text class="m" x="563" y="1371" font-size="26" font-weight="bold" textLength="126" lengthAdjust="spacingAndGlyphs">de Defensa</text>
<text class="m" x="563" y="1389" font-size="15.500" textLength="142" lengthAdjust="spacingAndGlyphs" opacity=".8">República Argentina</text>

<use href="#emb" x="855.500" y="1353"/>
<text class="m" x="905" y="1346" font-size="26" font-weight="bold" textLength="127" lengthAdjust="spacingAndGlyphs">Ministerio</text>
<text class="m" x="905" y="1371" font-size="26" font-weight="bold" textLength="153" lengthAdjust="spacingAndGlyphs">de Economía</text>
<text class="m" x="905" y="1389" font-size="15.500" textLength="144" lengthAdjust="spacingAndGlyphs">República Argentina</text>

<rect x="1155" y="1307" width="100" height="100" fill="#b8b4b3"/>
<rect x="1159.500" y="1312" width="90.500" height="76" fill="#e8e8e8"/>
<text x="1166" y="1362" font-family="'Liberation Sans',sans-serif" font-weight="bold" font-size="62" fill="#e83535" stroke="#e83535" stroke-width="1.800" textLength="77" lengthAdjust="spacingAndGlyphs">INTA</text>
<rect x="1165" y="1364" width="80.500" height="8" fill="#3a84c6"/>
<rect x="1165" y="1377" width="80.500" height="8" fill="#3a84c6"/>
</svg>
</body></html>
